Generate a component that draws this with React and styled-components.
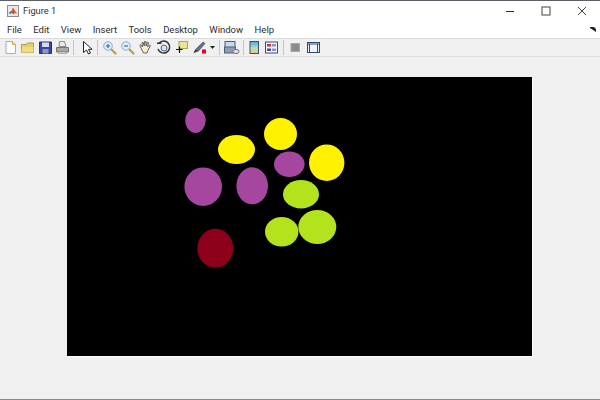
import React from 'react';
import styled, { createGlobalStyle } from 'styled-components';

const Global = createGlobalStyle`
  html, body { margin: 0; padding: 0; background: #f0f0f0; }
  body { font-family: Roboto, "Noto Sans", sans-serif; }
`;

const Win = styled.div`
  width: 600px;
  height: 400px;
  box-sizing: border-box;
  display: flex;
  flex-direction: column;
  background: #f0f0f0;
  border-top: 1px solid #5a6066;
  border-bottom: 1px solid #8a8a8a;
  overflow: hidden;
`;

const TitleBar = styled.div`
  height: 19px;
  flex: none;
  display: flex;
  align-items: center;
  background: #fff;
  padding-left: 7px;
`;

const TitleText = styled.span`
  font-size: 9.3px;
  color: #333;
  margin-left: 4px;
`;

const WinButtons = styled.div`
  margin-left: auto;
  display: flex;
  align-items: center;
`;

const WinBtn = styled.div`
  width: 36px;
  display: flex;
  justify-content: center;
`;

const MenuBar = styled.div`
  height: 18px;
  flex: none;
  display: flex;
  align-items: center;
  gap: 11.4px;
  background: #fff;
  padding: 0 4px 0 7px;
  font-size: 9.5px;
  color: #2c2c2c;
  border-bottom: 1px solid #dcdcdc;
`;

const Tray = styled.svg`
  margin-left: auto;
`;

const ToolBar = styled.div`
  height: 17px;
  flex: none;
  display: flex;
  align-items: center;
  padding-left: 1.25px;
  background: #f0f0f0;
  border-bottom: 1px solid #dedede;
`;

const Tool = styled.div`
  width: ${(p) => p.$w || 18}px;
  flex: none;
  display: flex;
  justify-content: center;
  align-items: center;
`;

const Sep = styled.div`
  width: 1px;
  height: 15px;
  flex: none;
  background: #c4c4c4;
  margin-left: ${(p) => p.$l}px;
  margin-right: ${(p) => p.$r}px;
`;

const Body = styled.div`
  flex: 1;
  padding: 20px 68px 0 67px;
`;

const Axes = styled.div`
  width: 465px;
  height: 279px;
  background: #000;
  box-shadow: 1px 1px 0 #fff;
`;

const Plot = styled.svg`
  display: block;
`;

const blobs = [
  [195.5, 120.5, 10.2, 12.5, '#a6479f'],
  [236.5, 149.5, 18.5, 14.5, '#fff200'],
  [280.5, 134, 16.5, 16, '#fff200'],
  [289.3, 164.3, 15.3, 12.7, '#a6479f'],
  [326.7, 162.7, 17.7, 18.3, '#fff200'],
  [203.2, 186.7, 18.8, 19.3, '#a6479f'],
  [252.2, 185.8, 15.8, 18.5, '#a6479f'],
  [301, 194.2, 18, 14.2, '#b2e31c'],
  [281.7, 231.8, 16.7, 14.8, '#b2e31c'],
  [317.3, 227, 19, 17, '#b2e31c'],
  [215.3, 248.2, 18, 19.5, '#8c0019'],
];

const Ico = ({ children, w = 15, h = 15 }) => (
  <svg width={w} height={h} viewBox={`0 0 ${w} ${h}`}>{children}</svg>
);

const NewIcon = () => (
  <Ico>
    <path d="M3 1.5h6.5l3 3v9h-9.5z" fill="#fdfdfd" stroke="#8fb4d8" />
    <path d="M9.5 1.5v3h3" fill="#f3dc9a" stroke="#d7a94a" />
  </Ico>
);
const OpenIcon = () => (
  <Ico>
    <path d="M1.5 4.5h5l1-1.5h6v9.5h-12z" fill="#e9cf6a" stroke="#a99a5c" />
    <path d="M2 7h11.5v5.5h-12z" fill="#f2dc83" />
  </Ico>
);
const SaveIcon = () => (
  <Ico>
    <path d="M1.5 2h12v11.5h-12z" fill="#3a43a0" stroke="#2b2f78" />
    <rect x="4" y="2.5" width="7" height="4.5" fill="#d4d8ee" />
    <rect x="4.5" y="9" width="6" height="4.5" fill="#8f95c8" />
  </Ico>
);
const PrintIcon = () => (
  <Ico>
    <path d="M4.5 1.5h5l1.5 5h-7z" fill="#e8e8e8" stroke="#8d8d8d" />
    <path d="M1.5 7.5h12v4.5h-12z" fill="#a9a9a9" stroke="#757575" />
    <path d="M3.5 12h8v1.5h-8z" fill="#dcdcdc" stroke="#8d8d8d" strokeWidth="0.6" />
  </Ico>
);
const PointerIcon = () => (
  <Ico>
    <path d="M3.5 1.5v11l3-2.5 2 4 2-1-2-3.7h3.6z" fill="#fff" stroke="#222" strokeWidth="1" />
  </Ico>
);
const ZoomIcon = ({ minus }) => (
  <Ico>
    <path d="M9 9l4.5 4.5" stroke="#c99a4b" strokeWidth="2.4" strokeLinecap="round" />
    <circle cx="6" cy="6" r="4.3" fill="#dcecf7" stroke="#8fb0cc" />
    <path d={minus ? 'M4 6h4' : 'M4 6h4M6 4v4'} stroke="#2c6aa0" strokeWidth="1.1" />
  </Ico>
);
const HandIcon = () => (
  <Ico>
    <path
      d="M3 8L1.8 5.5l1-.7L4.5 7 4 2.8l1.3-.3.9 3.5.3-4.500h1.300l.4 4.500 1-3.800 1.200.3-.7 4.300 1.700-1.800 1 .7-2.500 4.800-1 2.500H5.500z"
      fill="#f6ecd2"
      stroke="#55524c"
      strokeWidth="0.9"
    />
  </Ico>
);
const RotateIcon = () => (
  <Ico>
    <path d="M3 3.300A6 6 0 1 1 2 9" fill="none" stroke="#333" strokeWidth="1.5" />
    <path d="M1 2.500h4.500v1.500H1z" fill="#333" />
    <circle cx="8" cy="8" r="3" fill="#d9e3ef" stroke="#46688c" />
  </Ico>
);
const TipIcon = () => (
  <Ico>
    <rect x="5" y="1.500" width="8.500" height="7" fill="#ece692" stroke="#a8a45a" />
    <path d="M2 9.500h6.500M5.500 6.500v6.500" stroke="#111" strokeWidth="1.2" />
  </Ico>
);
const BrushIcon = () => (
  <Ico>
    <path d="M2 12l2-3 7-7 2 1.500-6.500 7.500z" fill="#6c6f8a" stroke="#4e5068" strokeWidth="0.7" />
    <path d="M1.500 13.500L4 9.500l2 1.500z" fill="#3b3b3b" />
    <rect x="10" y="9.500" width="4" height="4" fill="#e2001a" />
  </Ico>
);
const DropIcon = () => (
  <svg width="5" height="3" viewBox="0 0 5 3">
    <path d="M0 0h5L2.500 3z" fill="#222" />
  </svg>
);
const LinkIcon = () => (
  <Ico w={17}>
    <rect x="2" y="1.500" width="10" height="6" fill="#c7d8ea" stroke="#3f5f86" />
    <rect x="1.500" y="7" width="11" height="6" fill="#8f9fb0" stroke="#4e5f74" />
    <rect x="10" y="9.500" width="6" height="4" rx="2" fill="#d8dde2" stroke="#707a86" />
  </Ico>
);
const ColorbarIcon = () => (
  <Ico>
    <defs>
      <linearGradient id="cb" x1="0" y1="0" x2="0" y2="1">
        <stop offset="0" stopColor="#5aa4df" />
        <stop offset="0.55" stopColor="#b6dcc0" />
        <stop offset="1" stopColor="#f3c873" />
      </linearGradient>
    </defs>
    <rect x="3" y="1.500" width="8.500" height="12" fill="url(#cb)" stroke="#34507a" />
  </Ico>
);
const LegendIcon = () => (
  <Ico>
    <rect x="1.500" y="2" width="12" height="11" fill="#f6f6fb" stroke="#3c4a86" />
    <rect x="3" y="4" width="4" height="2.500" fill="#c9343c" />
    <rect x="8" y="4" width="4" height="2.500" fill="#8d94c4" />
    <rect x="3" y="8.500" width="4" height="2.500" fill="#3c4f9a" />
    <rect x="8" y="8.500" width="4" height="2.500" fill="#8d94c4" />
  </Ico>
);
const GrayIcon = () => (
  <Ico>
    <rect x="3" y="3.500" width="8.500" height="8" fill="#8c8c8c" stroke="#a8a8a8" />
  </Ico>
);
const FrameIcon = () => (
  <Ico>
    <rect x="1.500" y="2.500" width="12" height="10" fill="#f1f4f8" stroke="#2d4a72" />
    <path d="M1.500 4h12M3.500 4v8.500M11.500 4v8.500" stroke="#2d4a72" />
  </Ico>
);

const Logo = () => (
  <svg width="12" height="12" viewBox="0 0 12 12">
    <rect x="0.500" y="0.500" width="11" height="11" fill="#e9e9e9" stroke="#8d8d8d" />
    <path d="M1.500 8l3-2 1.500-3.500L8 6l2.500 2.500-2.500-.5-2 1.500L5 7.500z" fill="#d8501f" />
    <path d="M1.500 8l3-2 1 1.500-2 1.500z" fill="#3f7fb8" />
  </svg>
);

const menus = ['File', 'Edit', 'View', 'Insert', 'Tools', 'Desktop', 'Window', 'Help'];

export default function App() {
  return (
    <Win>
      <Global />
      <TitleBar>
        <Logo />
        <TitleText>Figure 1</TitleText>
        <WinButtons>
          <WinBtn>
            <svg width="10" height="10" viewBox="0 0 10 10">
              <path d="M1 5.500h8" stroke="#333" />
            </svg>
          </WinBtn>
          <WinBtn>
            <svg width="10" height="10" viewBox="0 0 10 10">
              <rect x="1" y="1" width="8" height="8" fill="none" stroke="#444" />
            </svg>
          </WinBtn>
          <WinBtn>
            <svg width="10" height="10" viewBox="0 0 10 10">
              <path d="M1 1l8 8M9 1l-8 8" stroke="#444" />
            </svg>
          </WinBtn>
        </WinButtons>
      </TitleBar>
      <MenuBar>
        {menus.map((m) => (
          <span key={m}>{m}</span>
        ))}
        <Tray width="6" height="5" viewBox="0 0 6 5">
          <path d="M0 0h4l2 2v3L3 3 0 1z" fill="#222" />
        </Tray>
      </MenuBar>
      <ToolBar>
        <Tool $w={17.5}><NewIcon /></Tool>
        <Tool $w={17.5}><OpenIcon /></Tool>
        <Tool $w={17.5}><SaveIcon /></Tool>
        <Tool $w={17.5}><PrintIcon /></Tool>
        <Sep $l={1.75} $r={4.25} />
        <Tool $w={17.5}><PointerIcon /></Tool>
        <Sep $l={1.25} $r={2.25} />
        <Tool><ZoomIcon /></Tool>
        <Tool><ZoomIcon minus /></Tool>
        <Tool><HandIcon /></Tool>
        <Tool><RotateIcon /></Tool>
        <Tool><TipIcon /></Tool>
        <Tool><BrushIcon /></Tool>
        <Tool $w={8}><DropIcon /></Tool>
        <Sep $l={2.75} $r={2} />
        <Tool><LinkIcon /></Tool>
        <Sep $l={3} $r={2} />
        <Tool $w={17}><ColorbarIcon /></Tool>
        <Tool $w={17}><LegendIcon /></Tool>
        <Sep $l={3} $r={2} />
        <Tool><GrayIcon /></Tool>
        <Tool><FrameIcon /></Tool>
      </ToolBar>
      <Body>
        <Axes>
          <Plot width="465" height="279" viewBox="67 77 465 279">
            {blobs.map(([cx, cy, rx, ry, fill]) => (
              <ellipse key={`${cx}-${cy}`} cx={cx} cy={cy} rx={rx} ry={ry} fill={fill} />
            ))}
          </Plot>
        </Axes>
      </Body>
    </Win>
  );
}
